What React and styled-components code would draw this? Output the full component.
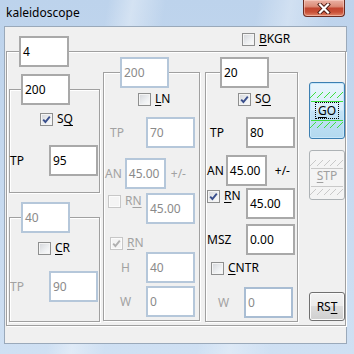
import styled, { createGlobalStyle } from "styled-components";

const GlobalStyle = createGlobalStyle`
  html, body {
    margin: 0;
    padding: 0;
    width: 354px;
    height: 354px;
    overflow: hidden;
    font-family: "Noto Sans", "Liberation Sans", sans-serif;
    font-size: 12px;
  }
`;

const Check = ({ label, checked, off }) => (
  <CheckRowInner>
    <CheckBox $off={off}>
      {checked && (
        <svg width="9" height="9" viewBox="0 0 9 9">
          <path
            d="M1.2 4.6 L3.4 7 L7.8 1.6"
            fill="none"
            stroke={off ? "#b0b0b0" : "#3a4f8c"}
            strokeWidth="1.9"
          />
        </svg>
      )}
    </CheckBox>
    <Label $off={off}>{label}</Label>
  </CheckRowInner>
);

const Hatch = ({ color, top, bottom }) => {
  const xs = [4, 11, 18, 24, 31];
  return (
    <HatchSvg width="36" height="60" viewBox="0 0 36 60">
      {xs.map((x) => (
        <line key={"t" + x} x1={x - 3} y1={top[0] + 6} x2={x + 3} y2={top[0]} stroke={color} />
      ))}
      <line x1="2" y1={top[1] + 0.5} x2="34" y2={top[1] + 0.5} stroke={color} />
      <line x1="2" y1={bottom[0] + 0.5} x2="34" y2={bottom[0] + 0.5} stroke={color} />
      {xs.map((x) => (
        <line key={"b" + x} x1={x - 3} y1={bottom[1] + 6} x2={x + 3} y2={bottom[1]} stroke={color} />
      ))}
    </HatchSvg>
  );
};

const App = () => {
  return (
    <>
      <GlobalStyle />
      <Window>
        <TitleBar>
          <Title>kaleidoscope</Title>
          <CloseButton>
            <svg width="14" height="11" viewBox="0 0 14 11">
              <path d="M3 1.5 L11 9.5 M11 1.5 L3 9.5" stroke="#4a1a12" strokeWidth="4" strokeLinecap="square" />
              <path d="M3 1.5 L11 9.5 M11 1.5 L3 9.5" stroke="#ffffff" strokeWidth="2.2" strokeLinecap="square" />
            </svg>
          </CloseButton>
        </TitleBar>
        <Client>
          <TopRow>
            <Check label={<><u>B</u>KGR</>} />
          </TopRow>
          <OuterGroup>
            <Legend $ml={12}>
              <Edit $w={50}>4</Edit>
            </Legend>
            <Columns>
              <Column $w={91} $mt={7}>
                <Group $pb={16}>
                  <Legend $ml={11}>
                    <Edit>200</Edit>
                  </Legend>
                  <Row $mt={6} $ml={30}>
                    <Check label={<>S<u>Q</u></>} checked />
                  </Row>
                  <FieldRow $mt={19} $mr={1}>
                    <Label>TP</Label>
                    <Edit>95</Edit>
                  </FieldRow>
                </Group>
                <Group $pb={19} $mt={9}>
                  <Legend $ml={11}>
                    <Edit $off>40</Edit>
                  </Legend>
                  <Row $mt={7} $ml={28}>
                    <Check label={<><u>C</u>R</>} />
                  </Row>
                  <FieldRow $mt={16} $mr={1}>
                    <Label $off>TP</Label>
                    <Edit $off>90</Edit>
                  </FieldRow>
                </Group>
              </Column>

              <Column $w={97} $mt={-10} $ml={3}>
                <Group $pb={3}>
                  <Legend $ml={16}>
                    <Edit $off>200</Edit>
                  </Legend>
                  <Row $mt={3} $ml={34}>
                    <Check label={<><u>L</u>N</>} />
                  </Row>
                  <FieldRow $mt={11} $mr={4} $pl={6}>
                    <Label $off>TP</Label>
                    <Edit $off>70</Edit>
                  </FieldRow>
                  <FieldRow $mt={10} $pl={1}>
                    <Label $off>AN</Label>
                    <Edit $off $w={41} $ml={3}>45.00</Edit>
                    <Label $off $ml={5}>+/-</Label>
                  </FieldRow>
                  <FieldRow $mt={4} $mr={4} $pl={4} $top>
                    <Check label={<>R<u>N</u></>} off />
                    <Edit $off>45.00</Edit>
                  </FieldRow>
                  <Row $mt={11} $ml={6}>
                    <Check label={<><u>R</u>N</>} checked off />
                  </Row>
                  <FieldRow $mt={2} $mr={4} $pl={17} $plr={25}>
                    <Label $off>H</Label>
                    <Edit $off>40</Edit>
                  </FieldRow>
                  <FieldRow $mt={3} $mr={4} $pl={16}>
                    <Label $off>W</Label>
                    <Edit $off>0</Edit>
                  </FieldRow>
                </Group>
              </Column>

              <Column $w={93} $mt={-10} $ml={5}>
                <Group $pb={3}>
                  <Legend $ml={14}>
                    <Edit>20</Edit>
                  </Legend>
                  <Row $mt={3} $ml={32}>
                    <Check label={<>S<u>O</u></>} checked />
                  </Row>
                  <FieldRow $mt={11} $mr={2} $pl={4}>
                    <Label>TP</Label>
                    <Edit>80</Edit>
                  </FieldRow>
                  <FieldRow $mt={7} $pl={1}>
                    <Label>AN</Label>
                    <Edit $w={41} $ml={2}>45.00</Edit>
                    <Label $ml={8}>+/-</Label>
                  </FieldRow>
                  <FieldRow $mt={2} $mr={2} $pl={1} $top>
                    <Check label={<><u>R</u>N</>} checked />
                    <Edit>45.00</Edit>
                  </FieldRow>
                  <FieldRow $mt={5} $mr={2} $pl={1}>
                    <Label>MSZ</Label>
                    <Edit>0.00</Edit>
                  </FieldRow>
                  <Row $mt={5} $ml={5}>
                    <Check label={<><u>C</u>NTR</>} />
                  </Row>
                  <FieldRow $mt={12} $mr={4} $pl={12}>
                    <Label $off>W</Label>
                    <Edit $off $blue>0</Edit>
                  </FieldRow>
                </Group>
              </Column>

              <ButtonColumn>
                <GoButton>
                  <Hatch color="#3fe03f" top={[10, 19]} bottom={[38, 40]} />
                  <Caption $focus>
                    <u>G</u>O
                  </Caption>
                </GoButton>
                <StopButton>
                  <Hatch color="#c9c9c9" top={[10, 18]} bottom={[36, 39]} />
                  <Caption $off>
                    <u>S</u>TP
                  </Caption>
                </StopButton>
                <ResetButton>
                  RS<u>T</u>
                </ResetButton>
              </ButtonColumn>
            </Columns>
          </OuterGroup>
        </Client>
      </Window>
    </>
  );
};

export default App;

const Window = styled.div`
  width: 354px;
  height: 354px;
  box-sizing: border-box;
  padding: 0 7px 10px 4px;
  display: flex;
  flex-direction: column;
  background:
    linear-gradient(100deg, transparent 26%, rgba(255, 255, 255, 0.35) 32%, transparent 40%, transparent 62%, rgba(255, 255, 255, 0.3) 70%, transparent 80%),
    linear-gradient(#bdd3ec, #cfe0f3);
`;

const TitleBar = styled.div`
  height: 26px;
  display: flex;
  align-items: flex-start;
  justify-content: space-between;
`;

const Title = styled.div`
  padding: 5px 0 0 2px;
  font-size: 12px;
  line-height: 16px;
  color: #000;
`;

const CloseButton = styled.div`
  width: 42px;
  height: 17px;
  margin-right: 2px;
  box-sizing: border-box;
  border: 1px solid #6b2c22;
  border-top: none;
  border-radius: 0 0 4px 4px;
  background: linear-gradient(#eab1a4 0%, #dc8c78 40%, #c24630 52%, #c84f36 75%, #e0876a 100%);
  box-shadow: inset 0 0 0 1px rgba(255, 220, 210, 0.5);
  display: flex;
  align-items: center;
  justify-content: center;
`;

const Client = styled.div`
  flex: 1;
  background: #f0f0f0;
  border: 1px solid #9aa9ba;
  display: flex;
  flex-direction: column;
`;

const TopRow = styled.div`
  height: 13px;
  padding: 5px 0 0 237px;
  display: flex;
`;

const OuterGroup = styled.fieldset`
  margin: -9px 0 0 1px;
  padding: 0 0 3px 0;
  width: 340px;
  box-sizing: border-box;
  min-width: 0;
  border: 1px solid #a0a0a0;
  box-shadow: inset 1px 1px 0 #fff, 1px 1px 0 #fff;
`;

const Legend = styled.legend`
  margin-left: ${(p) => p.$ml}px;
  padding: 0;
  line-height: 0;
`;

const Columns = styled.div`
  display: flex;
  align-items: flex-start;
  padding-left: 2px;
`;

const Column = styled.div`
  width: ${(p) => p.$w}px;
  margin-top: ${(p) => p.$mt}px;
  margin-left: ${(p) => p.$ml || 0}px;
  display: flex;
  flex-direction: column;
`;

const Group = styled.fieldset`
  margin: ${(p) => p.$mt || 0}px 0 0 0;
  padding: 0 0 ${(p) => p.$pb}px 0;
  min-width: 0;
  border: 1px solid #a0a0a0;
  box-shadow: inset 1px 1px 0 #fff, 1px 1px 0 #fff;
  display: flex;
  flex-direction: column;
`;

const Row = styled.div`
  display: flex;
  margin-top: ${(p) => p.$mt}px;
  margin-left: ${(p) => p.$ml}px;
`;

const FieldRow = styled.div`
  display: flex;
  align-items: ${(p) => (p.$top ? "flex-start" : "center")};
  justify-content: ${(p) => (p.$mr !== undefined ? "space-between" : "flex-start")};
  margin-top: ${(p) => p.$mt}px;
  margin-right: ${(p) => p.$mr || 0}px;
  padding-left: ${(p) => p.$pl || 0}px;
`;

const CheckRowInner = styled.div`
  display: flex;
  align-items: center;
  gap: 4px;
  padding-top: ${(p) => p.$pt || 0}px;
`;

const CheckBox = styled.span`
  width: 13px;
  height: 13px;
  box-sizing: border-box;
  border: 1px solid ${(p) => (p.$off ? "#c7c7c7" : "#8e8f8f")};
  background: ${(p) =>
    p.$off ? "#f4f4f4" : "linear-gradient(135deg, #d3d5d9 0%, #eef0f2 60%, #fcfcfc 100%)"};
  box-shadow: inset 0 0 0 1px ${(p) => (p.$off ? "#fbfbfb" : "#f4f4f4")};
  display: flex;
  align-items: center;
  justify-content: center;
  margin-top: 1px;
`;

const Label = styled.span`
  font-size: 12px;
  line-height: 15px;
  color: ${(p) => (p.$off ? "#a2a2a2" : "#000")};
  margin-left: ${(p) => p.$ml || 0}px;
  white-space: nowrap;

  u {
    text-underline-offset: 2px;
  }
`;

const Edit = styled.div`
  box-sizing: border-box;
  width: ${(p) => p.$w || 49}px;
  height: 31px;
  margin-left: ${(p) => p.$ml || 0}px;
  border: 2px solid ${(p) => (p.$blue ? "#a9bdd3" : p.$off ? "#b5c7da" : "#a9a9a9")};
  background: #fff;
  color: ${(p) => (p.$off ? "#8a8a8a" : "#000")};
  font-size: 12px;
  line-height: 27px;
  padding-left: 2px;
  text-align: left;
`;

const ButtonColumn = styled.div`
  width: 36px;
  margin: 15px 0 0 11px;
  display: flex;
  flex-direction: column;
`;

const ButtonBase = styled.div`
  position: relative;
  box-sizing: border-box;
  width: 36px;
  border-radius: 3px;
  display: flex;
  align-items: center;
  justify-content: center;
  font-size: 12px;

  u {
    text-underline-offset: 2px;
  }
`;

const GoButton = styled(ButtonBase)`
  height: 57px;
  border: 1px solid #3c7fb1;
  background: linear-gradient(#e9f5fc 0%, #d8eefb 48%, #c3e3f6 52%, #b3d9ef 100%);
  box-shadow: inset 0 0 0 1px #c6e7fb;
`;

const StopButton = styled(ButtonBase)`
  height: 50px;
  margin-top: 11px;
  border: 1px solid #adb2b5;
  background: #f4f4f4;
`;

const ResetButton = styled(ButtonBase)`
  height: 29px;
  margin-top: 92px;
  border: 1px solid #707070;
  background: linear-gradient(#f2f2f2 0%, #ebebeb 50%, #dddddd 50%, #cfcfcf 100%);
  box-shadow: inset 0 0 0 1px #fbfbfb;
  color: #000;
`;

const HatchSvg = styled.svg`
  position: absolute;
  left: -1px;
  top: -1px;
`;

const Caption = styled.span`
  position: relative;
  color: ${(p) => (p.$off ? "#a0a0a0" : "#000")};
  line-height: 13px;
  padding: 1px 2px;
  outline: ${(p) => (p.$focus ? "1px dotted #000" : "none")};
  margin-top: ${(p) => (p.$off ? "0" : "-1px")};
`;
